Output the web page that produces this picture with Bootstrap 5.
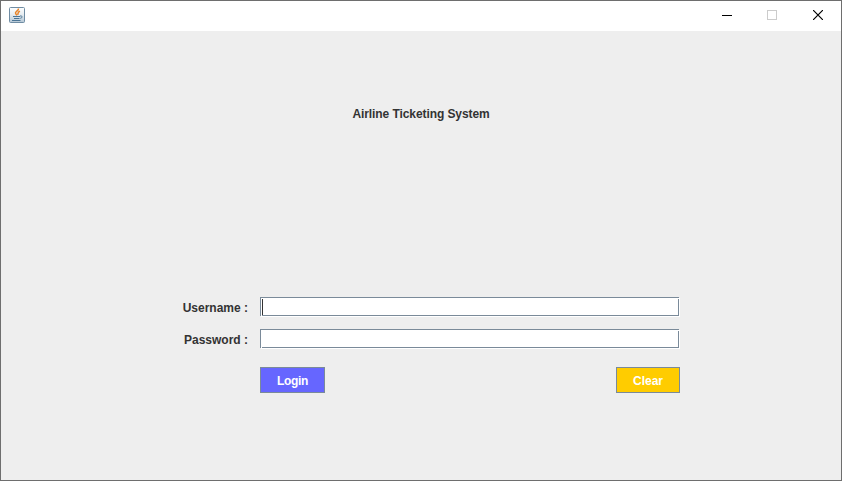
<!DOCTYPE html>
<html lang="en">
<head>
<meta charset="utf-8">
<meta name="viewport" content="width=device-width, initial-scale=1">
<title>Airline Ticketing System</title>
<link href="https://cdn.jsdelivr.net/npm/bootstrap@5.3.0/dist/css/bootstrap.min.css" rel="stylesheet">
<style>
body{font:bold 12px/16px "Liberation Sans",Arial,sans-serif;color:#333;background:#eee}
.app-window{border:1px solid #6e6e6e;background:#eee}
.title-bar{height:30px;padding-left:8px}
.win-btn{width:46px;height:28px}
.win-btn:first-child{width:45px}
.heading{margin-top:75px;font-size:12px;letter-spacing:-.08px;line-height:16px}
.login-form{width:500px;margin:175px 0 0 179px}
.field-row{height:20px;margin-bottom:12px}
.field-label{width:68px;margin-right:12px;padding-top:3px;letter-spacing:0}
.field-box.form-control{width:419px;height:19px;min-height:0;padding:1px 1px 0;border:1px solid #7a8a99;border-radius:0;background:#fff;box-shadow:1px 1px 0 #fff;font-size:12px}
/* one-pixel breaks in the bevel at the top-right and bottom-left corners */
.field-box::before,.field-box::after{content:"";position:absolute;width:1px;height:1px;background:#fff}
.field-box::before{top:0;right:-1px}
.field-box::after{bottom:-1px;left:0}
.action-row{margin-top:18px;padding-left:80px}
.flat-btn.btn{height:26px;padding:1px 0 0;border:1px solid #7a8a99;border-radius:0;color:#fff;font:bold 12px/16px "Liberation Sans",Arial,sans-serif}
.login-btn.btn{width:65px;background:#66f;letter-spacing:-.3px}
.clear-btn.btn{width:64px;background:#fc0}
.caret{width:1px;height:16px;background:#333}
</style>
<script src="https://cdn.jsdelivr.net/npm/bootstrap@5.3.0/dist/js/bootstrap.bundle.min.js"></script>
</head>
<body>
<div class="app-window vh-100 d-flex flex-column overflow-hidden">
  <header class="title-bar bg-white d-flex justify-content-between align-items-start flex-shrink-0">
    <svg class="mt-1" width="16" height="20" viewBox="0 -2 16 20" aria-label="Java">
      <defs><linearGradient id="tile" x2="0" y2="1"><stop stop-color="#fdfefe"/><stop offset=".45" stop-color="#e8eef2"/><stop offset="1" stop-color="#b4c6d4"/></linearGradient></defs>
      <rect x=".5" y=".5" width="15" height="15" rx="1" fill="url(#tile)" stroke="#6f8ca3"/>
      <path d="M9.500 1.500C9.800 4 5.500 4.500 6.600 6.500L8 8.400M11 4.300C8.300 5.200 9.400 6 8.800 7.800" fill="none" stroke="#e8852a" stroke-width="1.500"/>
      <path d="M4 9.500h7M5 11.500h5.500M3 13.500h8.500M11 9c2.700-.6 2.700 2 .3 2.300" fill="none" stroke="#4b7595" stroke-width="1"/>
    </svg>
    <div class="d-flex" role="group" aria-label="Window controls">
      <div class="win-btn d-flex align-items-center justify-content-center"><svg width="10" height="10" shape-rendering="crispEdges"><path d="M0 5.500h10" stroke="#000"/></svg></div>
      <div class="win-btn d-flex align-items-center justify-content-center"><svg width="10" height="10" shape-rendering="crispEdges"><path d="M.5.5h9v9h-9z" fill="none" stroke="#ccc"/></svg></div>
      <div class="win-btn d-flex align-items-center justify-content-center"><svg width="10" height="10"><path d="M0 0l10 10M10 0L0 10" stroke="#000" stroke-width="1.200"/></svg></div>
    </div>
  </header>
  <main>
    <h1 class="heading fw-bold text-center mb-0">Airline Ticketing System</h1>
    <form class="login-form">
      <div class="field-row d-flex">
        <label class="field-label text-end text-nowrap" for="username">Username :</label>
        <div id="username" class="field-box form-control d-flex position-relative" role="textbox"><span class="caret"></span></div>
      </div>
      <div class="field-row d-flex">
        <label class="field-label text-end text-nowrap" for="password">Password :</label>
        <div id="password" class="field-box form-control position-relative" role="textbox"></div>
      </div>
      <div class="action-row d-flex justify-content-between">
        <button type="button" class="flat-btn login-btn btn">Login</button>
        <button type="button" class="flat-btn clear-btn btn">Clear</button>
      </div>
    </form>
  </main>
</div>
</body>
</html>
